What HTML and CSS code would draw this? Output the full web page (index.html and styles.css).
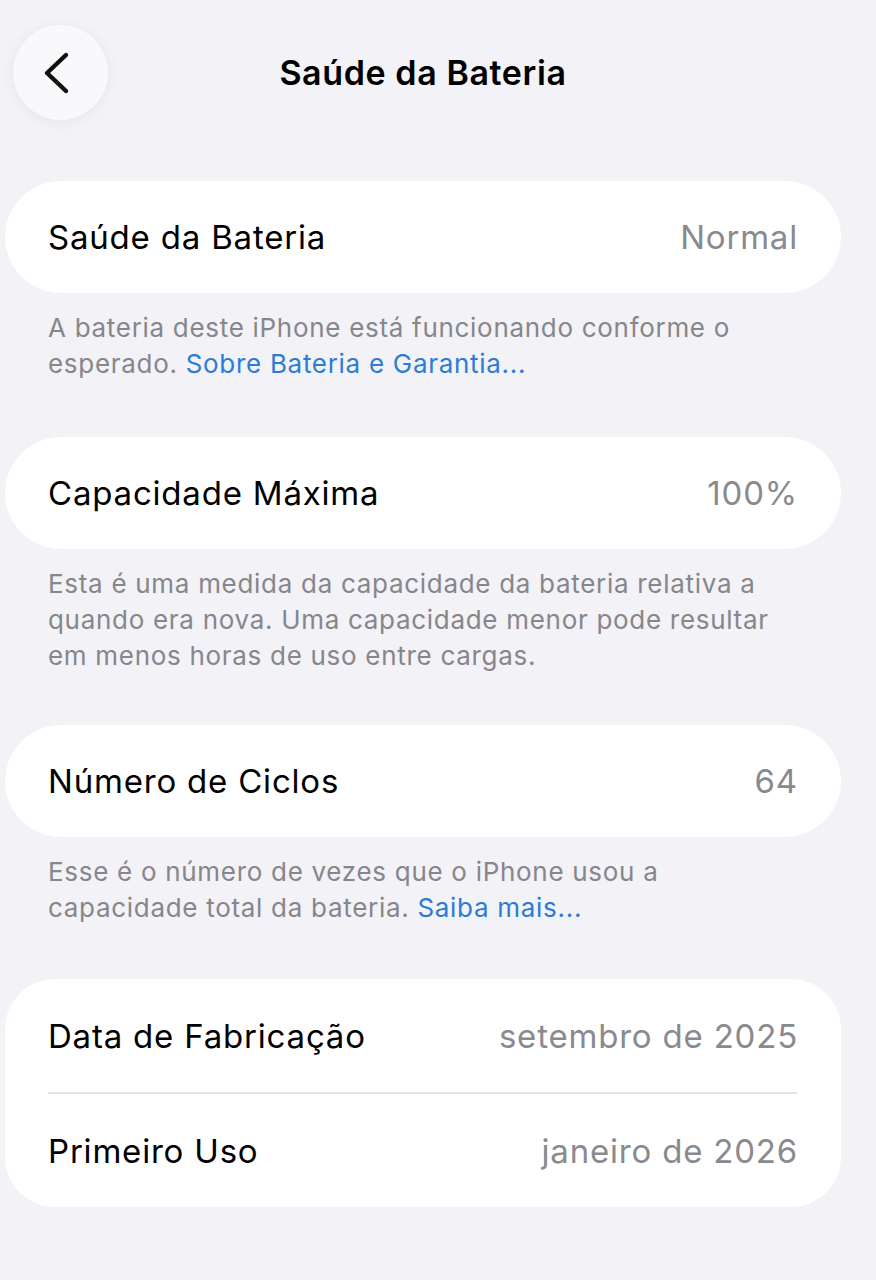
FILE: index.html
```html
<!DOCTYPE html>
<html lang="pt-BR">
<head>
<meta charset="utf-8">
<title>Saúde da Bateria</title>
<link rel="stylesheet" href="styles.css">
</head>
<body>
<div class="page">
  <header class="header">
    <div class="back">
      <svg width="40" height="44" viewBox="0 0 40 44" aria-hidden="true">
        <path d="M28 4 L9 22 L28 40" fill="none" stroke="#111" stroke-width="4.4" stroke-linecap="round" stroke-linejoin="round"/>
      </svg>
    </div>
    <h1 class="title">Saúde da Bateria</h1>
    <div></div>
  </header>

  <section class="group group-a">
    <div class="card">
      <div class="row"><span class="label">Saúde da Bateria</span><span class="value">Normal</span></div>
    </div>
    <p class="note">A bateria deste iPhone está funcionando conforme o esperado. <span class="link">Sobre Bateria e Garantia...</span></p>
  </section>

  <section class="group group-b">
    <div class="card">
      <div class="row"><span class="label">Capacidade Máxima</span><span class="value">100%</span></div>
    </div>
    <p class="note">Esta é uma medida da capacidade da bateria relativa a quando era nova. Uma capacidade menor pode resultar em menos horas de uso entre cargas.</p>
  </section>

  <section class="group">
    <div class="card">
      <div class="row"><span class="label">Número de Ciclos</span><span class="value">64</span></div>
    </div>
    <p class="note">Esse é o número de vezes que o iPhone usou a capacidade total da bateria. <span class="link">Saiba mais...</span></p>
  </section>

  <section class="group">
    <div class="card card-list">
      <div class="row"><span class="label">Data de Fabricação</span><span class="value">setembro de 2025</span></div>
      <div class="sep"></div>
      <div class="row"><span class="label">Primeiro Uso</span><span class="value">janeiro de 2026</span></div>
    </div>
  </section>
</div>
</body>
</html>
```

FILE: styles.css
```css
html, body {
  margin: 0;
  padding: 0;
  background: #f2f2f7;
}
body {
  font-family: Inter, "Noto Sans", "Liberation Sans", sans-serif;
  color: #000;
  width: 876px;
  height: 1280px;
  overflow: hidden;
}
.page {
  width: 836px;
  margin-left: 5px;
  padding-top: 25px;
}
.header {
  display: grid;
  grid-template-columns: 103px 1fr 103px;
  align-items: center;
  height: 95px;
  margin-bottom: 61px;
}
.back {
  margin-left: 8px;
  width: 95px;
  height: 95px;
  border-radius: 50%;
  background: #f9f9fb;
  box-shadow: 0 2px 14px rgba(0, 0, 0, 0.06);
  display: flex;
  align-items: center;
  justify-content: center;
}
.back svg {
  margin-left: -6px;
}
.title {
  margin: 0;
  text-align: center;
  font-size: 34px;
  font-weight: 600;
  letter-spacing: 0.6px;
}
.group {
  margin-bottom: 53px;
}
.group-a {
  margin-bottom: 55px;
}
.group-b {
  margin-bottom: 51px;
}
.card {
  background: #fff;
  border-radius: 56px;
  padding: 0 44px 0 43px;
}
.card-list {
  border-radius: 50px;
}
.row {
  height: 112px;
  display: flex;
  align-items: center;
  justify-content: space-between;
  font-size: 33px;
  letter-spacing: 0.8px;
}
.card-list .row {
  height: 113px;
}
.value {
  color: #8a8a8e;
  margin-right: -1px;
}
.sep {
  height: 2px;
  background: #e4e4e7;
}
.note {
  margin: 17px 0 0;
  padding: 0 44px 0 43px;
  font-size: 26px;
  line-height: 36px;
  color: #86868b;
  letter-spacing: 0.7px;
}
.link {
  color: #2c7cd6;
}
```
